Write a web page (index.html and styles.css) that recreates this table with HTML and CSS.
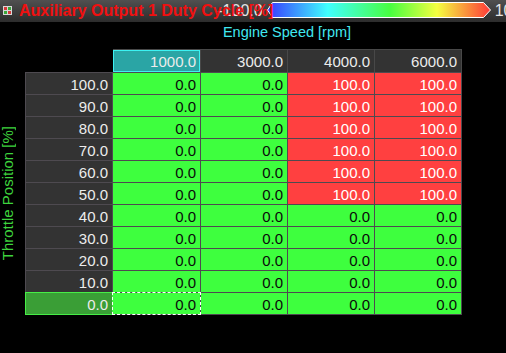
FILE: index.html
```html
<!DOCTYPE html>
<html>
<head>
<meta charset="utf-8">
<link rel="stylesheet" href="styles.css">
</head>
<body>
<div class="titlebar">
  <svg class="app-icon" width="9" height="9" viewBox="0 0 9 9">
    <rect x="0" y="0" width="9" height="9" fill="#d8d8d8"/>
    <rect x="1" y="1" width="3" height="3" fill="#d43a3a"/>
    <rect x="5" y="1" width="3" height="3" fill="#3aa83a"/>
    <rect x="1" y="5" width="3" height="3" fill="#3aa83a"/>
    <rect x="5" y="5" width="3" height="3" fill="#d43a3a"/>
  </svg>
  <span class="title">Auxiliary Output 1 Duty Cycle [%]</span>
  <span class="scale-min">-100.0</span>
  <svg class="scale-bar" width="224" height="16" viewBox="0 0 224 16">
    <defs>
      <linearGradient id="heat" x1="0" y1="0" x2="1" y2="0">
        <stop offset="0" stop-color="#3838ff"/>
        <stop offset="0.27" stop-color="#40ffff"/>
        <stop offset="0.55" stop-color="#48ff40"/>
        <stop offset="0.76" stop-color="#f4ff40"/>
        <stop offset="1" stop-color="#ff3838"/>
      </linearGradient>
    </defs>
    <polygon points="0.5,8 5.5,0.5 216.5,0.5 223.5,8 216.5,15.5 5.5,15.5" fill="url(#heat)" stroke="#ffffff" stroke-width="1"/>
  </svg>
  <span class="scale-max">100.0</span>
</div>

<div class="xaxis">Engine Speed [rpm]</div>

<div class="header-row">
  <div class="hcell selected">1000.0</div>
  <div class="hcell">3000.0</div>
  <div class="hcell">4000.0</div>
  <div class="hcell">6000.0</div>
</div>

<div class="body-row">
  <div class="yaxis"><span class="ylabel">Throttle Position [%]</span></div>
  <div class="grid">
    <div class="rh">100.0</div><div class="c g">0.0</div><div class="c g">0.0</div><div class="c r">100.0</div><div class="c r">100.0</div>
    <div class="rh">90.0</div><div class="c g">0.0</div><div class="c g">0.0</div><div class="c r">100.0</div><div class="c r">100.0</div>
    <div class="rh">80.0</div><div class="c g">0.0</div><div class="c g">0.0</div><div class="c r">100.0</div><div class="c r">100.0</div>
    <div class="rh">70.0</div><div class="c g">0.0</div><div class="c g">0.0</div><div class="c r">100.0</div><div class="c r">100.0</div>
    <div class="rh">60.0</div><div class="c g">0.0</div><div class="c g">0.0</div><div class="c r">100.0</div><div class="c r">100.0</div>
    <div class="rh">50.0</div><div class="c g">0.0</div><div class="c g">0.0</div><div class="c r">100.0</div><div class="c r">100.0</div>
    <div class="rh">40.0</div><div class="c g">0.0</div><div class="c g">0.0</div><div class="c g">0.0</div><div class="c g">0.0</div>
    <div class="rh">30.0</div><div class="c g">0.0</div><div class="c g">0.0</div><div class="c g">0.0</div><div class="c g">0.0</div>
    <div class="rh">20.0</div><div class="c g">0.0</div><div class="c g">0.0</div><div class="c g">0.0</div><div class="c g">0.0</div>
    <div class="rh">10.0</div><div class="c g">0.0</div><div class="c g">0.0</div><div class="c g">0.0</div><div class="c g">0.0</div>
    <div class="rh active">0.0</div><div class="c g focus">0.0</div><div class="c g">0.0</div><div class="c g">0.0</div><div class="c g">0.0</div>
  </div>
</div>
</body>
</html>
```

FILE: styles.css
```css
html, body {
  margin: 0;
  padding: 0;
  background: #000;
}

body {
  width: 506px;
  height: 353px;
  overflow: hidden;
  font-family: "Liberation Sans", Arial, sans-serif;
  color: #eeeeee;
}

.titlebar {
  height: 22px;
  display: flex;
  align-items: center;
  padding-left: 3px;
  white-space: nowrap;
  overflow: hidden;
  background: linear-gradient(#505050, #2c2c2c);
}

.app-icon {
  flex: none;
  margin-top: -2px;
}

.title {
  position: relative;
  z-index: 1;
  margin-left: 7px;
  margin-right: -56px;
  font-size: 16px;
  font-weight: bold;
  color: #f01010;
}

.scale-min {
  font-size: 16px;
  color: #e6e6e6;
  margin-right: 4px;
}

.scale-bar {
  flex: none;
  margin-top: -2px;
}

.scale-max {
  margin-left: 4px;
  font-size: 16px;
  color: #e6e6e6;
}

.xaxis {
  height: 27px;
  box-sizing: border-box;
  padding-top: 2px;
  margin-left: 113px;
  width: 348px;
  text-align: center;
  font-size: 14.5px;
  line-height: 17px;
  color: #40e8f0;
}

.header-row {
  margin-left: 113px;
  width: 349px;
  box-sizing: border-box;
  display: grid;
  grid-template-columns: 87px 86px 86px 86px;
  grid-template-rows: 22px;
  column-gap: 1px;
  padding: 1px 1px 0 0;
  background: #484848;
}

.hcell,
.rh,
.c {
  box-sizing: border-box;
  text-align: right;
  padding: 2px 4px 0 0;
  font-size: 15px;
  line-height: 19px;
}

.hcell {
  background: #333333;
  color: #ececec;
}

.hcell.selected {
  background: #2aa5a5;
  box-shadow: inset 0 0 0 1px #3cf2f2;
}

.body-row {
  display: flex;
}

.yaxis {
  width: 25px;
  flex: none;
  display: flex;
  align-items: center;
}

.ylabel {
  writing-mode: vertical-rl;
  transform: rotate(180deg);
  font-size: 15px;
  line-height: 16px;
  color: #3ed43e;
  white-space: nowrap;
}

.grid {
  display: grid;
  grid-template-columns: 86px 87px 86px 86px 86px;
  grid-auto-rows: 21px;
  gap: 1px;
  padding: 1px;
  background: #4e4a50;
}

.rh {
  background: #333333;
  color: #ececec;
}

.rh.active {
  background: #3a9e36;
  outline: 1px solid #46ee46;
}

.c.g {
  background: #3eff3e;
  color: #0a0a0a;
}

.c.r {
  background: #ff4040;
  color: #ffffff;
}

.c.focus {
  outline: 1px dashed #ffffff;
}
```
